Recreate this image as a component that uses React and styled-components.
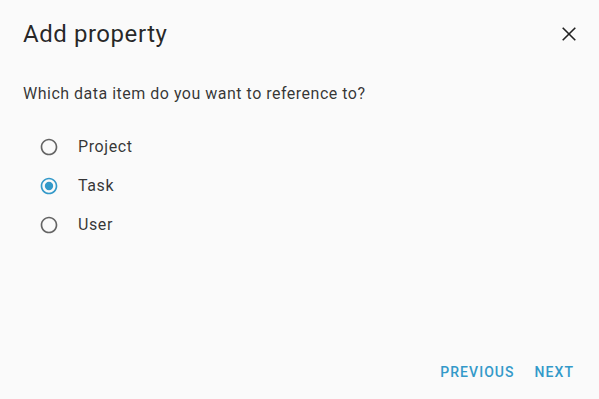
import React, { useState } from "react";
import styled, { createGlobalStyle } from "styled-components";

const Global = createGlobalStyle`
  html, body { margin: 0; padding: 0; background: #fafafa; }
  body { font-family: Roboto, "Noto Sans", sans-serif; }
`;

const Dialog = styled.div`
  width: 599px;
  height: 399px;
  background: #fafafa;
  display: flex;
  flex-direction: column;
  box-sizing: border-box;
  color: rgba(0, 0, 0, 0.87);
`;

const Header = styled.div`
  display: flex;
  align-items: center;
  justify-content: space-between;
  padding: 18px 18px 0 23px;
  height: 31px;
`;

const Title = styled.h2`
  margin: 0;
  font-size: 24px;
  font-weight: 400;
  letter-spacing: 0.55px;
  line-height: 31px;
  position: relative;
  top: 1px;
  color: rgba(0, 0, 0, 0.85);
`;

const CloseButton = styled.button`
  border: 0;
  background: none;
  padding: 0;
  width: 24px;
  height: 24px;
  display: flex;
  align-items: center;
  justify-content: center;
  cursor: pointer;
  color: rgba(0, 0, 0, 0.87);
`;

const Content = styled.div`
  flex: 1;
  padding: 0 23px;
`;

const Question = styled.p`
  margin: 33px 0 0;
  font-size: 16px;
  line-height: 24px;
  letter-spacing: 0.5px;
  color: rgba(0, 0, 0, 0.8);
`;

const Options = styled.div`
  display: flex;
  flex-direction: column;
  margin-top: 21px;
  margin-left: 16px;
`;

const Option = styled.label`
  display: flex;
  align-items: center;
  height: 39px;
  gap: 19px;
  cursor: pointer;
  font-size: 16px;
  letter-spacing: 0.6px;
  color: rgba(0, 0, 0, 0.8);
`;

const RadioIcon = styled.span`
  width: 20px;
  height: 20px;
  display: flex;
  align-items: center;
  justify-content: center;
  color: ${(p) => (p.$checked ? "#3399c9" : "rgba(0,0,0,0.6)")};
`;

const Actions = styled.div`
  display: flex;
  justify-content: flex-end;
  align-items: center;
  gap: 20px;
  padding: 0 25px 15px 0;
`;

const ActionButton = styled.button`
  border: 0;
  background: none;
  padding: 0;
  font-family: Roboto, sans-serif;
  font-size: 14px;
  font-weight: 500;
  letter-spacing: 1.05px;
  line-height: 24px;
  color: #3399c9;
  text-transform: uppercase;
  cursor: pointer;
`;

function Radio({ checked }) {
  return (
    <RadioIcon $checked={checked}>
      <svg width="20" height="20" viewBox="0 0 24 24" fill="currentColor">
        <path d="M12 2C6.48 2 2 6.48 2 12s4.48 10 10 10 10-4.48 10-10S17.52 2 12 2zm0 18c-4.42 0-8-3.58-8-8s3.58-8 8-8 8 3.58 8 8-3.58 8-8 8z" />
        {checked && <circle cx="12" cy="12" r="5" />}
      </svg>
    </RadioIcon>
  );
}

export default function App() {
  const [value, setValue] = useState("Task");
  const items = ["Project", "Task", "User"];
  return (
    <>
      <Global />
      <Dialog>
        <Header>
          <Title>Add property</Title>
          <CloseButton aria-label="close">
            <svg width="24" height="24" viewBox="0 0 24 24" fill="none" stroke="currentColor" strokeWidth="1.6">
              <path d="M5.7 5.7 18.3 18.3M18.3 5.7 5.7 18.3" />
            </svg>
          </CloseButton>
        </Header>
        <Content>
          <Question>Which data item do you want to reference to?</Question>
          <Options>
            {items.map((it) => (
              <Option key={it} onClick={() => setValue(it)}>
                <Radio checked={value === it} />
                {it}
              </Option>
            ))}
          </Options>
        </Content>
        <Actions>
          <ActionButton>Previous</ActionButton>
          <ActionButton>Next</ActionButton>
        </Actions>
      </Dialog>
    </>
  );
}
